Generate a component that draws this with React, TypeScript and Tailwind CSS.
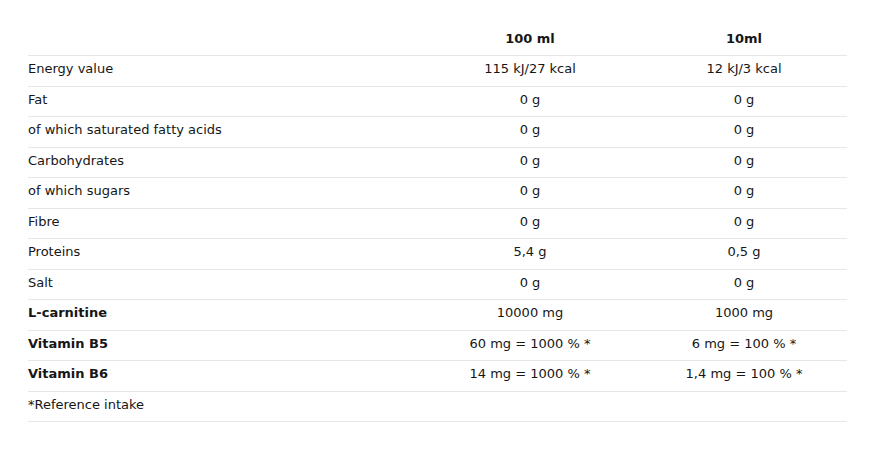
const rows: { label: string; a: string; b: string; bold?: boolean }[] = [
  { label: 'Energy value', a: '115 kJ/27 kcal', b: '12 kJ/3 kcal' },
  { label: 'Fat', a: '0 g', b: '0 g' },
  { label: 'of which saturated fatty acids', a: '0 g', b: '0 g' },
  { label: 'Carbohydrates', a: '0 g', b: '0 g' },
  { label: 'of which sugars', a: '0 g', b: '0 g' },
  { label: 'Fibre', a: '0 g', b: '0 g' },
  { label: 'Proteins', a: '5,4 g', b: '0,5 g' },
  { label: 'Salt', a: '0 g', b: '0 g' },
  { label: 'L-carnitine', a: '10000 mg', b: '1000 mg', bold: true },
  { label: 'Vitamin B5', a: '60 mg = 1000 % *', b: '6 mg = 100 % *', bold: true },
  { label: 'Vitamin B6', a: '14 mg = 1000 % *', b: '1,4 mg = 100 % *', bold: true },
  { label: '*Reference intake', a: '', b: '' },
];

export default function App() {
  return (
    <div className="w-[884px] h-[456px] bg-white pt-[24px] pl-[28px] text-[13px] text-[#161616] font-['DejaVu_Sans',sans-serif]">
      <div className="w-[819px]">
        <div className="grid grid-cols-[391px_222px_206px] h-[32px] pb-[1px] items-center font-bold border-b border-[#e6e6e6]">
          <div />
          <div className="text-center">100 ml</div>
          <div className="text-center">10ml</div>
        </div>
        {rows.map((r) => (
          <div
            key={r.label}
            className="grid grid-cols-[391px_222px_206px] h-[30.5px] pb-[4px] items-center border-b border-[#e6e6e6]"
          >
            <div className={r.bold ? 'font-bold' : ''}>{r.label}</div>
            <div className="text-center">{r.a}</div>
            <div className="text-center">{r.b}</div>
          </div>
        ))}
      </div>
    </div>
  );
}
